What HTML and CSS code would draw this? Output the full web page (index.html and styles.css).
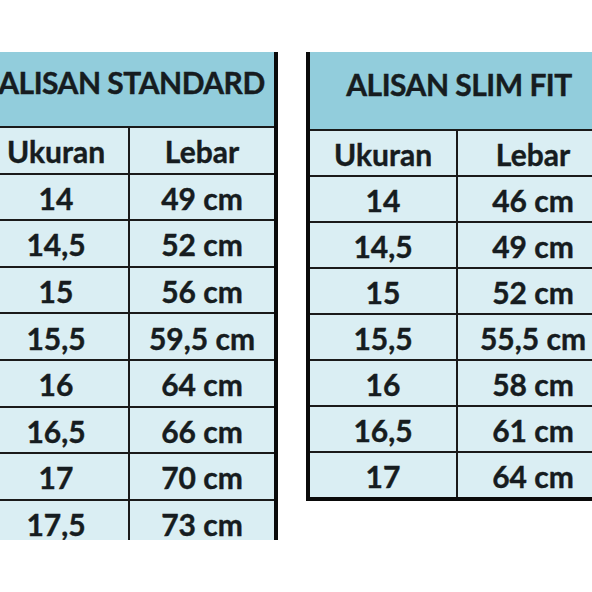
FILE: index.html
```html
<!DOCTYPE html>
<html lang="id">
<head>
<meta charset="utf-8">
<title>Ukuran Kalisan</title>
<link rel="stylesheet" href="styles.css">
</head>
<body>
<div class="page">
  <div class="clip-left">
    <div class="tbl tbl-left">
      <div class="head"><span>ALISAN STANDARD</span></div>
      <div class="row"><div class="cell">Ukuran</div><div class="cell">Lebar</div></div>
      <div class="row"><div class="cell">14</div><div class="cell">49 cm</div></div>
      <div class="row"><div class="cell">14,5</div><div class="cell">52 cm</div></div>
      <div class="row"><div class="cell">15</div><div class="cell">56 cm</div></div>
      <div class="row"><div class="cell">15,5</div><div class="cell">59,5 cm</div></div>
      <div class="row"><div class="cell">16</div><div class="cell">64 cm</div></div>
      <div class="row"><div class="cell">16,5</div><div class="cell">66 cm</div></div>
      <div class="row"><div class="cell">17</div><div class="cell">70 cm</div></div>
      <div class="row"><div class="cell">17,5</div><div class="cell">73 cm</div></div>
    </div>
  </div>
  <div class="tbl tbl-right">
    <div class="head"><span>ALISAN SLIM FIT</span></div>
    <div class="row"><div class="cell">Ukuran</div><div class="cell">Lebar</div></div>
    <div class="row"><div class="cell">14</div><div class="cell">46 cm</div></div>
    <div class="row"><div class="cell">14,5</div><div class="cell">49 cm</div></div>
    <div class="row"><div class="cell">15</div><div class="cell">52 cm</div></div>
    <div class="row"><div class="cell">15,5</div><div class="cell">55,5 cm</div></div>
    <div class="row"><div class="cell">16</div><div class="cell">58 cm</div></div>
    <div class="row"><div class="cell">16,5</div><div class="cell">61 cm</div></div>
    <div class="row"><div class="cell">17</div><div class="cell">64 cm</div></div>
  </div>
</div>
</body>
</html>
```
FILE: styles.css
```css
html, body {
  margin: 0;
  padding: 0;
  background: #ffffff;
}
body {
  width: 592px;
  height: 592px;
  overflow: hidden;
  font-family: Lato, "Open Sans", sans-serif;
  font-weight: 700;
  color: #161c20;
  -webkit-text-stroke: 0.4px #161c20;
}
.page {
  display: flex;
  align-items: flex-start;
  padding-top: 52px;
}
.clip-left {
  margin-left: -16px;
  height: 488px;
  overflow: hidden;
  flex: none;
}
.tbl {
  box-sizing: border-box;
  background: #daeef3;
  flex: none;
}
.tbl-left {
  width: 294px;
  border-right: 4px solid #0a0a0a;
}
.tbl-right {
  width: 302px;
  margin-left: 28px;
  border-left: 4px solid #0a0a0a;
  border-bottom: 4px solid #0a0a0a;
}
.head {
  box-sizing: border-box;
  background: #92cddc;
  border-bottom: 2px solid #1a1a1a;
  display: flex;
  align-items: center;
  justify-content: center;
  font-size: 30px;
  letter-spacing: -0.5px;
  white-space: nowrap;
}
.tbl-left .head {
  height: 76px;
  padding-bottom: 14px;
  padding-left: 5px;
}
.tbl-right .head {
  height: 79px;
  padding-bottom: 14px;
}
.row {
  box-sizing: border-box;
  display: grid;
  border-bottom: 2px solid #1a1a1a;
  font-size: 30px;
}
.tbl-left .row {
  height: 46.6px;
  grid-template-columns: 144px 1fr;
}
.tbl-right .row {
  height: 46px;
  grid-template-columns: 146px 1fr;
}
.tbl-right .row:last-child {
  border-bottom: none;
  height: 44px;
}
.cell {
  display: flex;
  align-items: center;
  justify-content: center;
  padding-top: 2px;
  white-space: nowrap;
}
.cell + .cell {
  border-left: 2px solid #1a1a1a;
}
```
